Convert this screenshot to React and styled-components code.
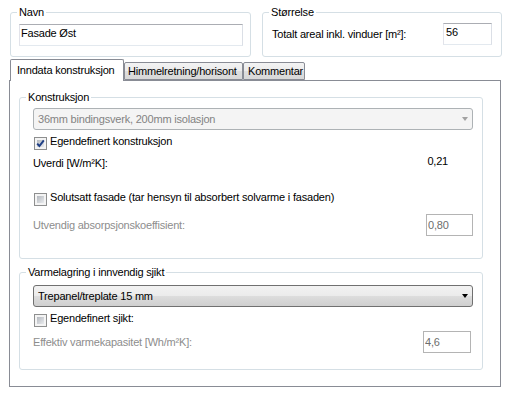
import React from "react";
import styled, { createGlobalStyle } from "styled-components";

const GlobalStyle = createGlobalStyle`
  * { box-sizing: border-box; }
  body {
    margin: 0;
    background: #fff;
    font-family: "Liberation Sans", Arial, sans-serif;
    font-size: 11px;
    letter-spacing: -0.2px;
    color: #000;
  }
`;

const Window = styled.div`
  width: 507px;
  height: 396px;
  padding-top: 5px;
  overflow: hidden;
`;

const TopRow = styled.div`
  display: flex;
  gap: 11px;
  margin-left: 10px;
`;

const GroupBox = styled.fieldset`
  margin: 0;
  min-width: 0;
  width: ${(p) => p.$w}px;
  height: ${(p) => p.$h}px;
  border: 1px solid #d5dfe5;
  border-radius: 3px;
  padding: ${(p) => p.$pad};
  display: flex;
  flex-direction: column;
`;

const Legend = styled.legend`
  padding: 0 2px;
  margin-left: ${(p) => p.$offset}px;
  line-height: 14px;
  color: #000;
`;

const TextInput = styled.input`
  width: ${(p) => p.$w}px;
  height: 22px;
  flex: none;
  margin: 0 ${(p) => p.$mr || 0}px 0 0;
  padding: 0 1px ${(p) => (p.$dim ? 0 : 4)}px ${(p) => p.$pl || 1}px;
  font: inherit;
  line-height: 13px;
  letter-spacing: -0.2px;
  color: ${(p) => (p.$dim ? "#6d6d6d" : "#000")};
  background: #fff;
  border: 1px solid;
  border-color: ${(p) =>
    p.$dim ? "#b4b4b4" : "#abadb3 #dbdfe6 #e3e9ef #e2e3ea"};
  border-radius: 0;
  outline: none;
`;

const FieldRow = styled.div`
  display: flex;
  align-items: center;
  justify-content: space-between;
  height: 22px;
  margin-top: ${(p) => p.$mt || 0}px;
`;

const Label = styled.span`
  line-height: 13px;
  white-space: nowrap;
  color: ${(p) => (p.$dim ? "#8d8d8d" : "#000")};
`;

const TabStrip = styled.div`
  display: flex;
  align-items: flex-start;
  height: 21px;
  margin: 2px 0 0 10px;
  position: relative;
  z-index: 1;
`;

const Tab = styled.div`
  width: ${(p) => p.$w}px;
  height: ${(p) => (p.$active ? 22 : 18)}px;
  margin-top: ${(p) => (p.$active ? 0 : 3)}px;
  padding-left: ${(p) => p.$pl}px;
  display: flex;
  align-items: center;
  line-height: 13px;
  white-space: nowrap;
  border: 1px solid #898c95;
  border-bottom: ${(p) => (p.$active ? "none" : "1px solid #898c95")};
  border-radius: 2px 2px 0 0;
  background: ${(p) =>
    p.$active ? "#fff" : "linear-gradient(#f3f3f3, #ebebeb 50%, #dedede 50%, #d8d8d8)"};
  padding-bottom: ${(p) => (p.$active ? 1 : 0)}px;
`;

const TabPanel = styled.div`
  width: 492px;
  height: 307px;
  margin-left: 9px;
  border: 1px solid #898c95;
  padding: 9px 0 0 9px;
  display: flex;
  flex-direction: column;
  gap: 6px;
`;

const Combo = styled.div`
  height: 22px;
  flex: none;
  display: flex;
  align-items: center;
  padding: 0 4px 0 4px;
  line-height: 13px;
  border: 1px solid ${(p) => (p.$dim ? "#adb2b5" : "#707070")};
  border-radius: 3px;
  color: ${(p) => (p.$dim ? "#838383" : "#000")};
  background: ${(p) =>
    p.$dim ? "#f4f4f4" : "linear-gradient(#f2f2f2, #ebebeb 50%, #dddddd 50%, #cfcfcf)"};
`;

const ComboText = styled.span`
  flex: 1;
`;

const Arrow = styled.span`
  width: 0;
  height: 0;
  border-left: 3.5px solid transparent;
  border-right: 3.5px solid transparent;
  border-top: 4px solid ${(p) => (p.$dim ? "#a2a2a2" : "#000")};
`;

const CheckRow = styled.label`
  display: flex;
  align-items: flex-start;
  height: 13px;
  margin-top: ${(p) => p.$mt}px;
`;

const Box = styled.span`
  position: relative;
  width: 13px;
  height: 13px;
  flex: none;
  margin-left: 1px;
  border: 1px solid #8e8f8f;
  background: #f4f4f4;
  padding: 2px;
  display: flex;

  &::before {
    content: "";
    flex: 1;
    background: linear-gradient(135deg, #b4b8be, #e9ebee);
  }

  svg {
    position: absolute;
    left: 0;
    top: 0;
  }
`;

const CheckText = styled.span`
  margin: -2px 0 0 3px;
  line-height: 13px;
  white-space: nowrap;
`;

const ValueRow = styled.div`
  display: flex;
  align-items: center;
  height: 20px;
  margin-top: 3px;
`;

const Value = styled.span`
  align-self: flex-start;
  margin: 2px 25px 0 auto;
  line-height: 13px;
`;

const CheckBox = ({ checked, children, mt }) => (
  <CheckRow $mt={mt}>
    <Box>
      {checked && (
        <svg width="11" height="11" viewBox="0 0 11 11">
          <path d="M2.2 5.6 L4.4 8 L8.8 2.4" fill="none" stroke="#1f3f86" strokeWidth="2" />
        </svg>
      )}
    </Box>
    <CheckText>{children}</CheckText>
  </CheckRow>
);

const App = () => {
  return (
    <Window>
      <GlobalStyle />
      <TopRow>
        <GroupBox $w={241} $h={52} $pad="5px 8px 0">
          <Legend $offset={-2}>Navn</Legend>
          <TextInput $w={224} readOnly defaultValue="Fasade Øst" />
        </GroupBox>
        <GroupBox $w={240} $h={52} $pad="4px 9px 0">
          <Legend $offset={-3}>Størrelse</Legend>
          <FieldRow>
            <Label>Totalt areal inkl. vinduer [m²]:</Label>
            <TextInput $w={49} $pl={2} readOnly defaultValue="56" />
          </FieldRow>
        </GroupBox>
      </TopRow>

      <TabStrip>
        <Tab $active $w={114} $pl={6}>Inndata konstruksjon</Tab>
        <Tab $w={119} $pl={3}>Himmelretning/horisont</Tab>
        <Tab $w={62} $pl={4}>Kommentar</Tab>
      </TabStrip>

      <TabPanel>
        <GroupBox $w={464} $h={169} $pad="4px 9px 0 13px">
          <Legend $offset={-7}>Konstruksjon</Legend>
          <Combo $dim>
            <ComboText>36mm bindingsverk, 200mm isolasjon</ComboText>
            <Arrow $dim />
          </Combo>
          <CheckBox checked mt={7}>Egendefinert konstruksjon</CheckBox>
          <ValueRow>
            <Label>Uverdi [W/m²K]:</Label>
            <Value>0,21</Value>
          </ValueRow>
          <CheckBox mt={20}>Solutsatt fasade (tar hensyn til absorbert solvarme i fasaden)</CheckBox>
          <FieldRow $mt={8}>
            <Label $dim>Utvendig absorpsjonskoeffisient:</Label>
            <TextInput $w={47} $dim readOnly defaultValue="0,80" />
          </FieldRow>
        </GroupBox>

        <GroupBox $w={464} $h={105} $pad="6px 9px 0 13px">
          <Legend $offset={-7}>Varmelagring i innvendig sjikt</Legend>
          <Combo>
            <ComboText>Trepanel/treplate 15 mm</ComboText>
            <Arrow />
          </Combo>
          <CheckBox mt={7}>Egendefinert sjikt:</CheckBox>
          <FieldRow $mt={4}>
            <Label $dim>Effektiv varmekapasitet [Wh/m²K]:</Label>
            <TextInput $w={48} $mr={2} $dim readOnly defaultValue="4,6" />
          </FieldRow>
        </GroupBox>
      </TabPanel>
    </Window>
  );
};

export default App;
